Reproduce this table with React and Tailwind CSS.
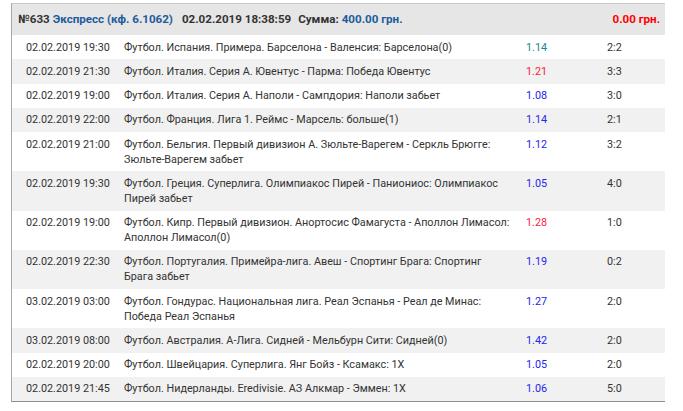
import React from "react";

const rows = [
  ["02.02.2019 19:30", "Футбол. Испания. Примера. Барселона - Валенсия: Барселона(0)", "1.14", "2:2", "teal"],
  ["02.02.2019 21:30", "Футбол. Италия. Серия А. Ювентус - Парма: Победа Ювентус", "1.21", "3:3", "red"],
  ["02.02.2019 19:00", "Футбол. Италия. Серия А. Наполи - Сампдория: Наполи забьет", "1.08", "3:0", "blue"],
  ["02.02.2019 22:00", "Футбол. Франция. Лига 1. Реймс - Марсель: больше(1)", "1.14", "2:1", "blue"],
  ["02.02.2019 21:00", "Футбол. Бельгия. Первый дивизион А. Зюльте-Варегем - Серкль Брюгге: Зюльте-Варегем забьет", "1.12", "3:2", "blue"],
  ["02.02.2019 19:30", "Футбол. Греция. Суперлига. Олимпиакос Пирей - Паниониос: Олимпиакос Пирей забьет", "1.05", "4:0", "blue"],
  ["02.02.2019 19:00", "Футбол. Кипр. Первый дивизион. Анортосис Фамагуста - Аполлон Лимасол: Аполлон Лимасол(0)", "1.28", "1:0", "red"],
  ["02.02.2019 22:30", "Футбол. Португалия. Примейра-лига. Авеш - Спортинг Брага: Спортинг Брага забьет", "1.19", "0:2", "blue"],
  ["03.02.2019 03:00", "Футбол. Гондурас. Национальная лига. Реал Эспанья - Реал де Минас: Победа Реал Эспанья", "1.27", "2:0", "blue"],
  ["03.02.2019 08:00", "Футбол. Австралия. А-Лига. Сидней - Мельбурн Сити: Сидней(0)", "1.42", "2:0", "blue"],
  ["02.02.2019 20:00", "Футбол. Швейцария. Суперлига. Янг Бойз - Ксамакс: 1X", "1.05", "2:0", "blue"],
  ["02.02.2019 21:45", "Футбол. Нидерланды. Eredivisie. АЗ Алкмар - Эммен: 1X", "1.06", "5:0", "blue"],
];

const oddColor = {
  teal: "text-[#14878f]",
  red: "text-[#ff1a3c]",
  blue: "text-[#2424ee]",
};

export default function App() {
  return (
    <div className="bg-white w-[683px] h-[411px] pt-[3px] pl-[11px]" style={{ fontFamily: "Roboto, 'Noto Sans', sans-serif" }}>
      <div className="w-[654px] border-l border-t border-b border-l-[#a6a6a6] border-t-[#c8c8c8] border-b-[#8f8f8f]">
        <div className="flex items-center h-[31px] bg-[#e6e6e6] pl-[6px] pr-[5px] text-[11.6px] font-bold text-[#333]">
          <span>№633</span>
          <span className="ml-[3px] text-[#1c5c9c]">Экспресс (кф. 6.1062)</span>
          <span className="ml-[9px]">02.02.2019 18:38:59</span>
          <span className="ml-[7px]">Сумма:</span>
          <span className="ml-[3px] text-[#1c5c9c]">400.00 грн.</span>
          <span className="ml-auto text-[#ff0000]">0.00 грн.</span>
        </div>
        {rows.map((r, i) => (
          <div
            key={i}
            className={`grid grid-cols-[112px_402px_81px_1fr] text-[10.8px] leading-[15px] text-[#333] py-[4.625px] ${i % 2 === 0 ? "bg-white" : "bg-[#f1f1f1]"}`}
          >
            <div className="pl-[14px]">{r[0]}</div>
            <div className="pr-[15px]">{r[1]}</div>
            <div className={oddColor[r[4]]}>{r[2]}</div>
            <div>{r[3]}</div>
          </div>
        ))}
      </div>
    </div>
  );
}
